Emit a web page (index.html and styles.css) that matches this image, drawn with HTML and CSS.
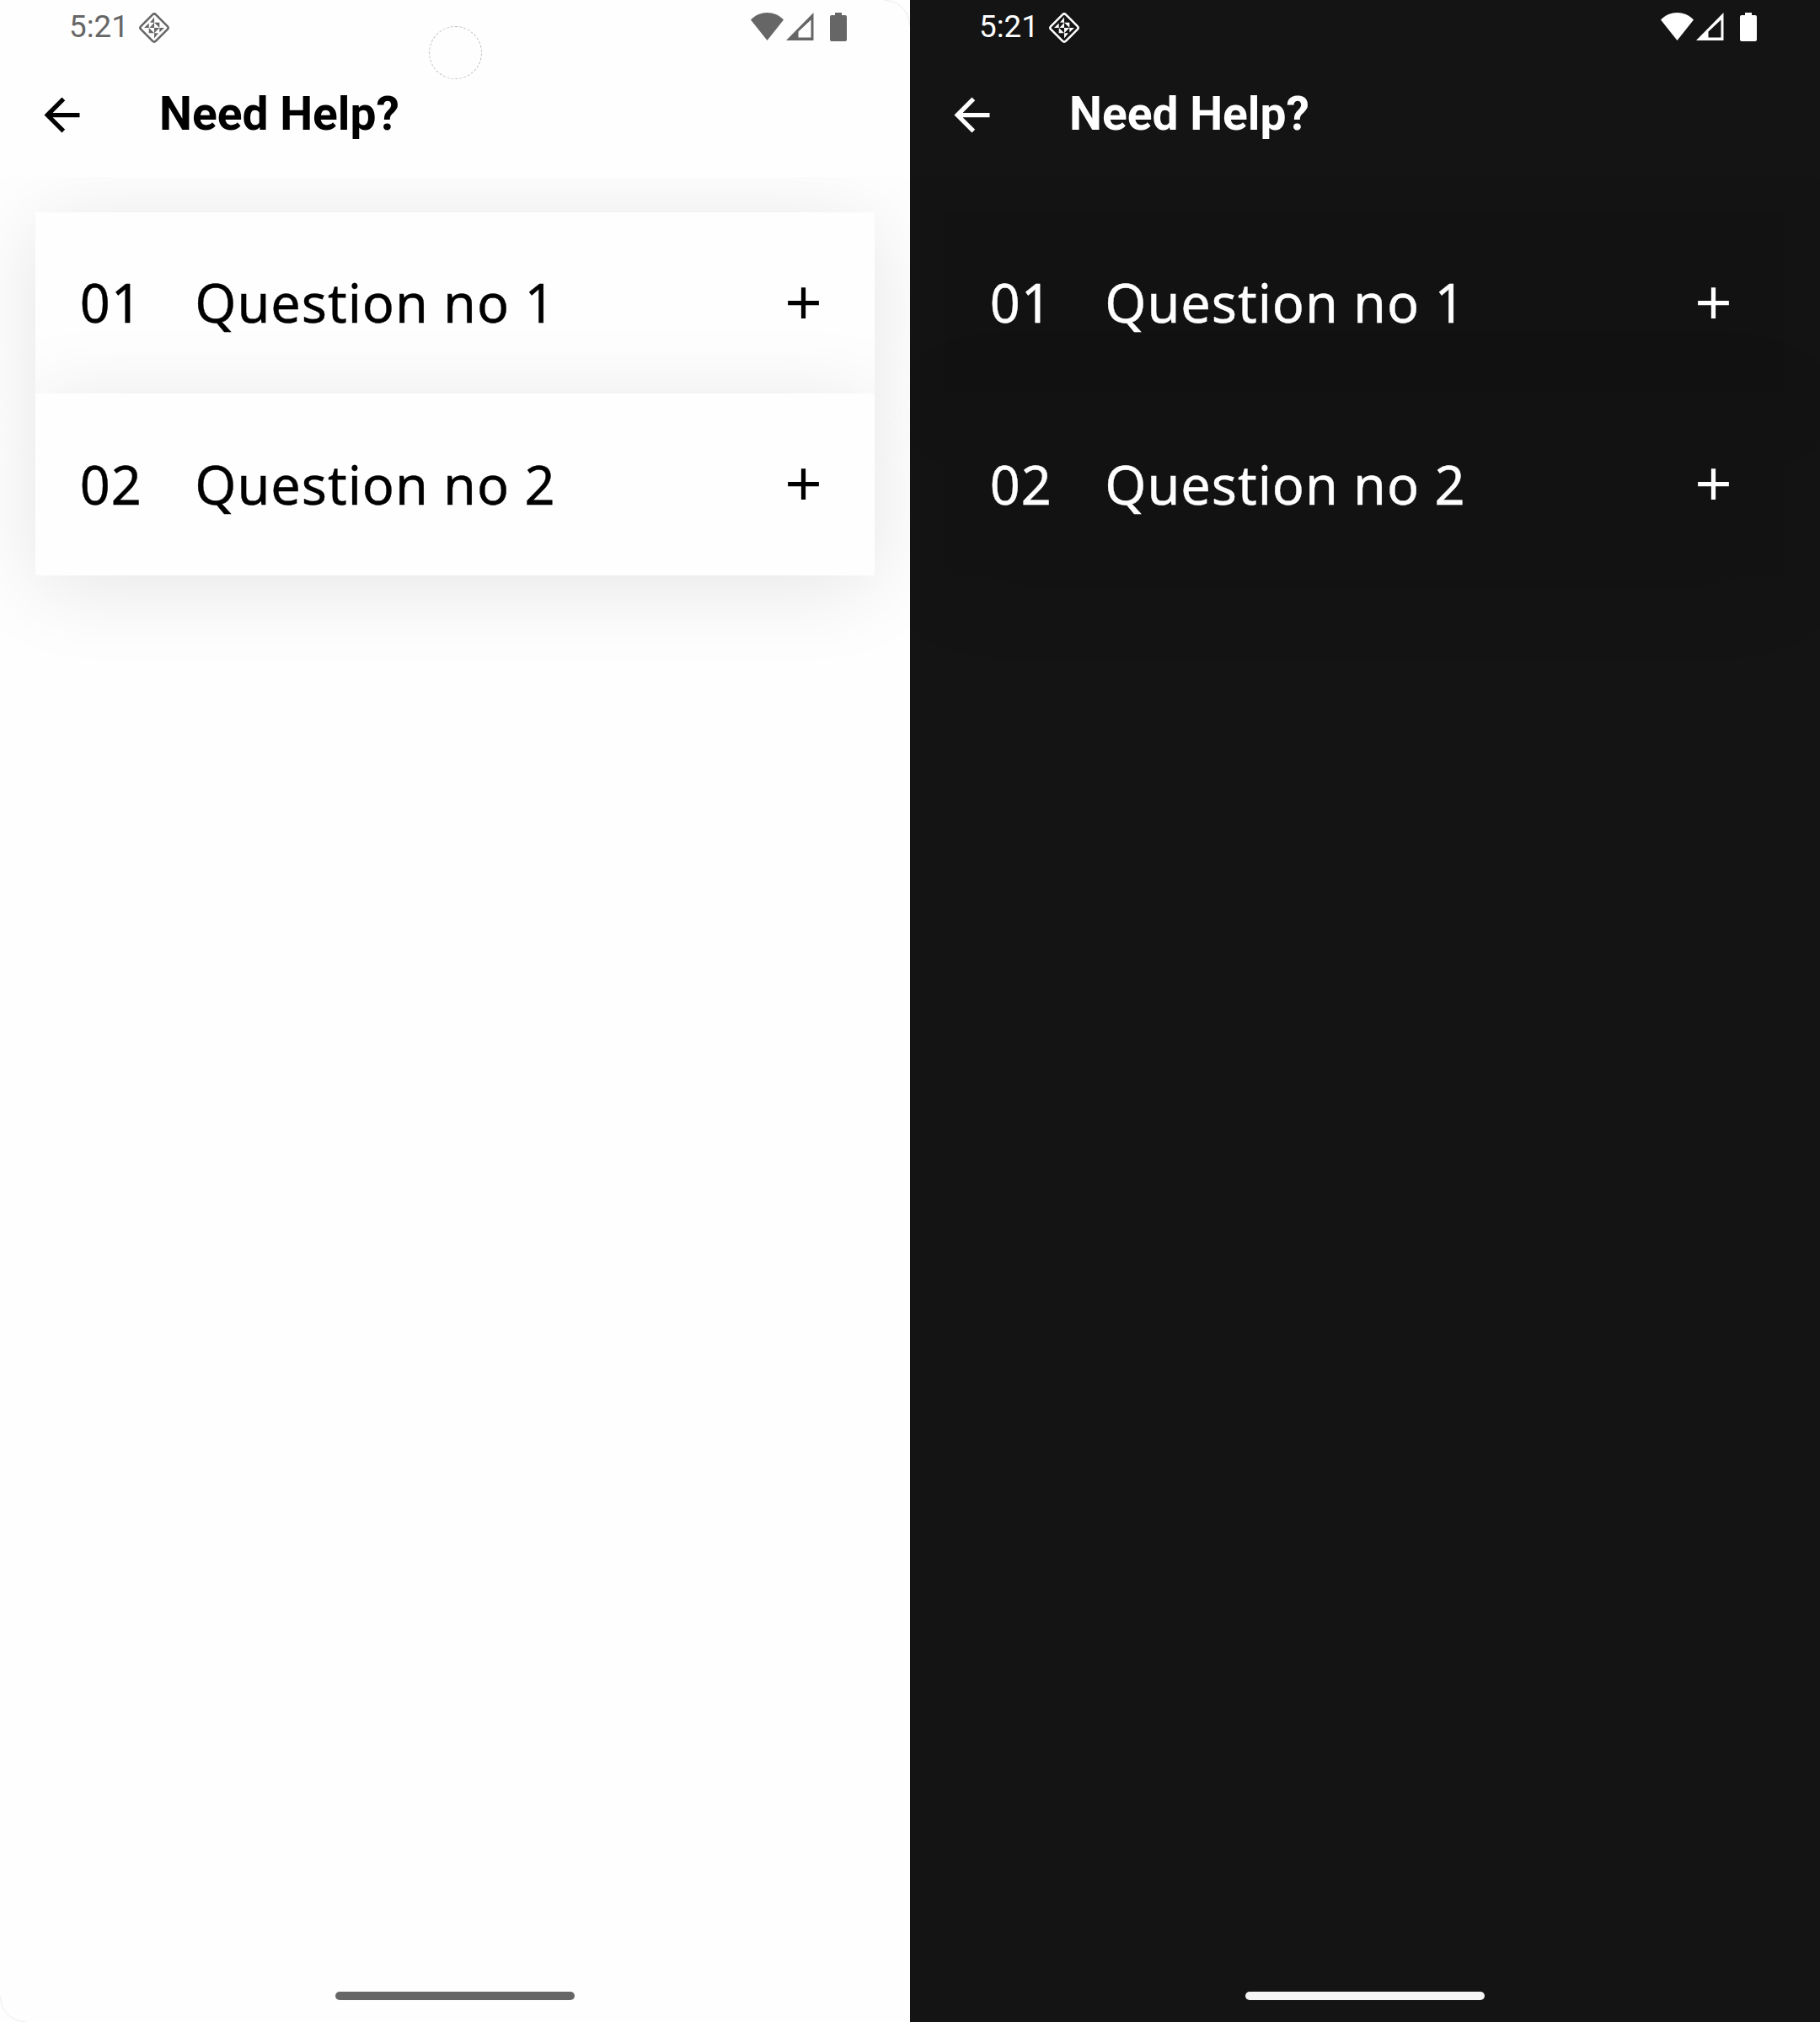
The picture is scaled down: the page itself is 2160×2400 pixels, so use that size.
FILE: index.html
```html
<!DOCTYPE html>
<html lang="en">
<head>
<meta charset="utf-8">
<title>Need Help?</title>
<link rel="stylesheet" href="styles.css">
</head>
<body>
<svg width="0" height="0" class="defs" aria-hidden="true">
  <symbol id="debug" viewBox="0 0 38 38">
    <rect x="6.500" y="6.500" width="25" height="25" rx="2.800" fill="none" stroke="currentColor" stroke-width="2.500" transform="rotate(45 19 19)"/>
    <path fill="currentColor" d="M19 6.500v6.200h-5zM7 19l5.700-5.500V19zM19 12.700V19h-5.500zM19 12.700h6.300V19zM12.700 19v6.300H19zM19 19h6.300L19 25.300zM31 19l-5.700 5.500V19zM19 31.500v-6.200h5z"/>
  </symbol>
  <symbol id="wifi" viewBox="0 0 39 33">
    <path fill="currentColor" d="M0 8.500C11-2.800 28-2.800 39 8.500L19.500 33z"/>
  </symbol>
  <symbol id="signal" viewBox="0 0 33 33">
    <path fill="currentColor" fill-rule="evenodd" d="M0 33L32.500 0V33zM14.500 22.500V29.500H29.500V8.500z"/>
  </symbol>
  <symbol id="battery" viewBox="0 0 20 34">
    <path fill="currentColor" d="M6 0h8v3h4a2 2 0 0 1 2 2v27a2 2 0 0 1-2 2H2a2 2 0 0 1-2-2V5a2 2 0 0 1 2-2h4z"/>
  </symbol>
  <symbol id="back" viewBox="0 0 24 24">
    <path fill="currentColor" d="M20 11H7.830l5.590-5.590L12 4l-8 8 8 8 1.410-1.410L7.830 13H20z"/>
  </symbol>
  <symbol id="plus" viewBox="0 0 24 24">
    <path fill="currentColor" d="M19 13h-6v6h-2v-6H5v-2h6V5h2v6h6z"/>
  </symbol>
</svg>
<main class="screens">
  <section class="phone light">
    <span class="camera"></span>
    <header class="status">
      <span class="time">5:21</span>
      <svg class="debug"><use href="#debug"/></svg>
      <svg class="wifi"><use href="#wifi"/></svg>
      <svg class="signal"><use href="#signal"/></svg>
      <svg class="battery"><use href="#battery"/></svg>
    </header>
    <nav class="appbar">
      <svg class="icon"><use href="#back"/></svg>
      <h1 class="title">Need Help?</h1>
    </nav>
    <div class="list">
      <div class="row"><span class="num">01</span><span class="question">Question no 1</span><svg class="icon"><use href="#plus"/></svg></div>
      <div class="row"><span class="num">02</span><span class="question">Question no 2</span><svg class="icon"><use href="#plus"/></svg></div>
    </div>
    <footer class="gesture"><span class="pill"></span></footer>
  </section>
  <section class="phone dark">
    <header class="status">
      <span class="time">5:21</span>
      <svg class="debug"><use href="#debug"/></svg>
      <svg class="wifi"><use href="#wifi"/></svg>
      <svg class="signal"><use href="#signal"/></svg>
      <svg class="battery"><use href="#battery"/></svg>
    </header>
    <nav class="appbar">
      <svg class="icon"><use href="#back"/></svg>
      <h1 class="title">Need Help?</h1>
    </nav>
    <div class="list">
      <div class="row"><span class="num">01</span><span class="question">Question no 1</span><svg class="icon"><use href="#plus"/></svg></div>
      <div class="row"><span class="num">02</span><span class="question">Question no 2</span><svg class="icon"><use href="#plus"/></svg></div>
    </div>
    <footer class="gesture"><span class="pill"></span></footer>
  </section>
</main>
</body>
</html>
```
FILE: styles.css
```css
* { box-sizing: border-box; }
body { margin: 0; background: #fff; }
.defs { position: absolute; }
svg { display: block; flex: none; }
.screens { display: flex; width: 2160px; height: 2400px; }
.phone {
  position: relative;
  display: flex;
  flex-direction: column;
  width: 1080px;
  height: 2400px;
  overflow: hidden;
  background: var(--bg);
  color: var(--ink);
}
.light { --bg: #fefefe; --card: #fefefe; --ink: #000; --system: #666; --pill: #666; }
.dark { --bg: #141414; --card: #121212; --ink: #fff; --system: #fff; --pill: #f5f5f5; }

/* hairline outline of the display corners */
.light::after {
  content: "";
  position: absolute;
  inset: 0;
  border: 1px solid #ececec;
  border-radius: 30px;
  clip-path: polygon(0 0, 30px 0, 30px 30px, 0 30px, 0 2370px, 30px 2370px, 30px 100%, 0 100%, 0 2370px, 0 30px, 30px 30px, 30px 0, 1050px 0, 100% 0, 100% 30px, 1050px 30px, 1050px 0);
}
.camera {
  position: absolute;
  left: 509px;
  top: 31px;
  width: 63px;
  height: 63px;
  border: 1px dashed #bbb;
  border-radius: 50%;
}
.status {
  display: flex;
  align-items: flex-start;
  height: 63px;
  padding: 14px 75px 0 82px;
  color: var(--system);
}
.time { width: 82px; font: 400 36.750px/36px Roboto, sans-serif; }
.debug { width: 38px; height: 38px; margin-right: auto; }
.wifi { width: 39px; height: 33px; margin: 1px 3px 0 0; }
.signal { width: 33px; height: 33px; margin: 1px 19px 0 0; }
.battery { width: 20px; height: 34px; margin-top: 1px; }
.icon { width: 63px; height: 63px; }
.appbar {
  display: flex;
  align-items: center;
  gap: 84px;
  height: 147px;
  padding-left: 42px;
}
.title { margin: 0; padding-bottom: 3px; font: 700 55.125px/66px Roboto, sans-serif; }
.list {
  flex: 1;
  padding: 42px 42px 0;
  overflow: hidden;
}
.row {
  display: flex;
  align-items: center;
  height: 215.300px;
  padding: 0 52.800px;
  background: var(--card);
  box-shadow: 0 13px 102px rgba(0, 0, 0, 0.1);
  font: 400 63px/86px "Noto Sans", sans-serif;
  letter-spacing: 0.950px;
  -webkit-text-stroke: 0.400px currentColor;
}
.row:first-child span { margin-bottom: 1.500px; }
.row .icon { margin-bottom: 1px; }
.num { width: 136.500px; }
.question { flex: 1; }
.gesture {
  display: flex;
  justify-content: center;
  height: 36px;
}
.pill { width: 284px; height: 10px; border-radius: 5px; background: var(--pill); }
```
